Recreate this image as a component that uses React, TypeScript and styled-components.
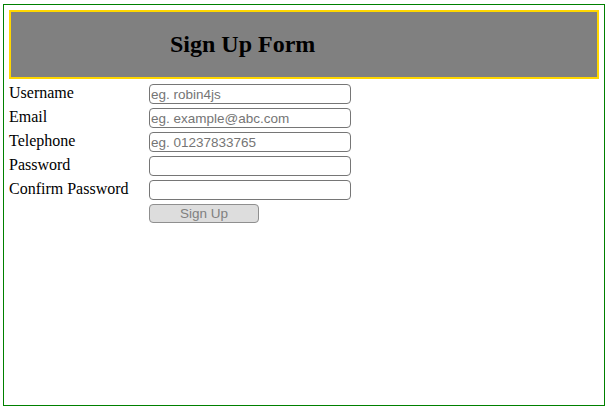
import React from "react";
import styled, { createGlobalStyle } from "styled-components";

const Global = createGlobalStyle`
  html, body { margin: 0; padding: 0; background: #ffffff; }
  body { font-family: "Liberation Serif", "Times New Roman", serif; color: #000; }
`;

const Page = styled.div`
  box-sizing: border-box;
  margin: 4px 0 0 3px;
  width: 602px;
  height: 402px;
  border: 1px solid #008000;
  padding: 5px;
`;

const Header = styled.div`
  box-sizing: border-box;
  height: 69px;
  background: #808080;
  border: 2px solid #ffd700;
  display: flex;
  align-items: center;
  padding-left: 159px;
  padding-bottom: 2px;
`;

const Title = styled.h2`
  margin: 0;
  font-size: 24px;
  font-weight: bold;
  line-height: 28px;
`;

const Form = styled.form`
  display: grid;
  grid-template-columns: 140px 203px;
  grid-auto-rows: 24px;
  margin-top: 3px;
  align-items: center;
`;

const Label = styled.label`
  font-size: 16px;
  line-height: 18px;
  white-space: nowrap;
  margin-top: -2px;
`;

const Input = styled.input`
  box-sizing: border-box;
  width: 202px;
  height: 20px;
  margin: 0;
  padding: 1px 1px;
  border: 1px solid #767676;
  border-radius: 4px;
  font-family: "Liberation Sans", Arial, sans-serif;
  font-size: 13.5px;
  color: #000;
  background: #fff;
  outline: none;
  &::placeholder { color: #757575; }
`;

const Button = styled.button`
  grid-column: 2;
  align-self: start;
  box-sizing: border-box;
  width: 110px;
  height: 19px;
  margin: 2px 0 0;
  padding: 0;
  border: 1px solid #8f8f8f;
  border-radius: 4px;
  background: #dddddd;
  color: #808080;
  font-family: "Liberation Sans", Arial, sans-serif;
  font-size: 13.5px;
  line-height: 17px;
`;

const fields = [
  { label: "Username", type: "text", ph: "eg. robin4js" },
  { label: "Email", type: "email", ph: "eg. example@abc.com" },
  { label: "Telephone", type: "tel", ph: "eg. 01237833765" },
  { label: "Password", type: "password", ph: "" },
  { label: "Confirm Password", type: "password", ph: "" },
];

export default function App() {
  return (
    <>
      <Global />
      <Page>
        <Header>
          <Title>Sign Up Form</Title>
        </Header>
        <Form onSubmit={(e) => e.preventDefault()}>
          {fields.map((f) => (
            <React.Fragment key={f.label}>
              <Label>{f.label}</Label>
              <Input type={f.type} placeholder={f.ph} />
            </React.Fragment>
          ))}
          <Button type="submit" disabled>Sign Up</Button>
        </Form>
      </Page>
    </>
  );
}
